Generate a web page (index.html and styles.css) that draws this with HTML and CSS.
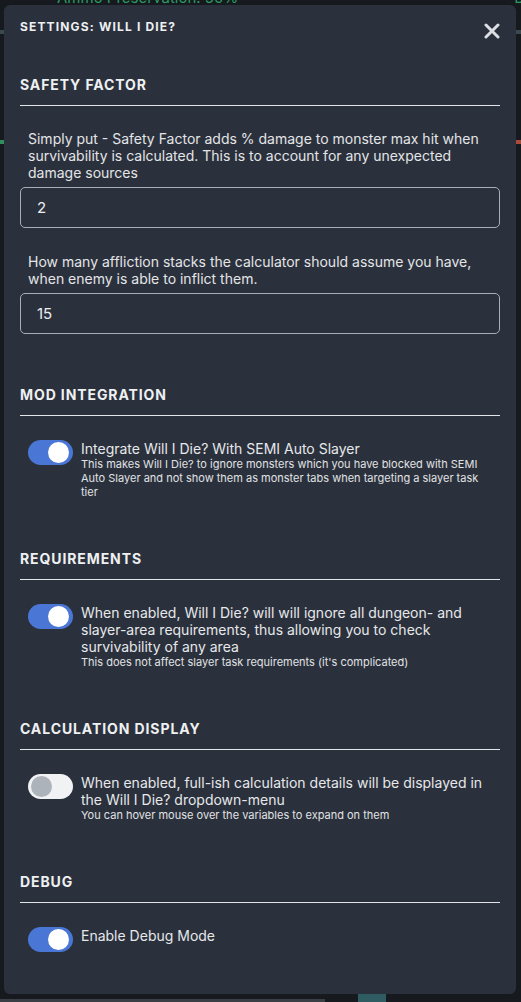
FILE: index.html
```html
<!DOCTYPE html>
<html lang="en">
<head>
<meta charset="utf-8">
<title>Settings: Will I Die?</title>
<link rel="stylesheet" href="styles.css">
</head>
<body>
<div class="backdrop">
  <div class="bd-top"><span class="bd-green">Ammo Preservation: 50%</span><span class="bd-green bd-right">D</span></div>
  <div class="bd-rule"></div>
  <div class="bd-bars"><span class="bd-bar green"></span><span class="bd-bar red"></span></div>
  <div class="bd-bottom"><span class="bd-grey"></span><span class="bd-teal"></span></div>
</div>

<div class="modal" role="dialog" aria-label="Settings: Will I Die?">
  <div class="modal-head">
    <h1 class="modal-title">SETTINGS: WILL I DIE?</h1>
    <button class="close" aria-label="Close">
      <svg width="16" height="16" viewBox="0 0 16 16"><path d="M2 2 L14 14 M14 2 L2 14" stroke="#dcdfe3" stroke-width="3" stroke-linecap="round"/></svg>
    </button>
  </div>

  <section class="section first">
    <h2 class="section-title">SAFETY FACTOR</h2>
    <div class="section-body fields">
      <div class="field">
        <p class="field-label">Simply put - Safety Factor adds % damage to monster max hit when survivability is calculated. This is to account for any unexpected damage sources</p>
        <div class="input">2</div>
      </div>
      <div class="field">
        <p class="field-label">How many affliction stacks the calculator should assume you have, when enemy is able to inflict them.</p>
        <div class="input">15</div>
      </div>
    </div>
  </section>

  <section class="section">
    <h2 class="section-title">MOD INTEGRATION</h2>
    <div class="section-body">
      <div class="toggle-row">
        <span class="switch on"><span class="knob"></span></span>
        <div class="toggle-text">
          <div class="toggle-label">Integrate Will I Die? With SEMI Auto Slayer</div>
          <div class="toggle-hint">This makes Will I Die? to ignore monsters which you have blocked with SEMI Auto Slayer and not show them as monster tabs when targeting a slayer task tier</div>
        </div>
      </div>
    </div>
  </section>

  <section class="section">
    <h2 class="section-title">REQUIREMENTS</h2>
    <div class="section-body">
      <div class="toggle-row">
        <span class="switch on"><span class="knob"></span></span>
        <div class="toggle-text">
          <div class="toggle-label">When enabled, Will I Die? will will ignore all dungeon- and slayer-area requirements, thus allowing you to check survivability of any area</div>
          <div class="toggle-hint">This does not affect slayer task requirements (it's complicated)</div>
        </div>
      </div>
    </div>
  </section>

  <section class="section">
    <h2 class="section-title">CALCULATION DISPLAY</h2>
    <div class="section-body">
      <div class="toggle-row">
        <span class="switch off"><span class="knob"></span></span>
        <div class="toggle-text">
          <div class="toggle-label">When enabled, full-ish calculation details will be displayed in the Will I Die? dropdown-menu</div>
          <div class="toggle-hint">You can hover mouse over the variables to expand on them</div>
        </div>
      </div>
    </div>
  </section>

  <section class="section">
    <h2 class="section-title">DEBUG</h2>
    <div class="section-body">
      <div class="toggle-row">
        <span class="switch on"><span class="knob"></span></span>
        <div class="toggle-text">
          <div class="toggle-label">Enable Debug Mode</div>
        </div>
      </div>
    </div>
  </section>
</div>
</body>
</html>
```

FILE: styles.css
```css
* { box-sizing: border-box; }

html, body {
  margin: 0;
  height: 100%;
}

body {
  background: #16191e;
  font-family: Inter, "Noto Sans", "Liberation Sans", sans-serif;
  overflow: hidden;
}

/* page behind the modal */
.backdrop {
  height: 100%;
  display: flex;
  flex-direction: column;
}
.bd-top {
  display: flex;
  justify-content: space-between;
  margin-top: -10px;
  padding: 0 0 0 57px;
  font-size: 15px;
  line-height: 16px;
}
.bd-green { color: #2b9a63; }
.bd-right { margin-right: -4px; }
.bd-rule {
  margin-top: 24px;
  height: 4px;
  background: #3b4850;
}
.bd-bars {
  margin-top: 106px;
  display: flex;
  justify-content: space-between;
}
.bd-bar { height: 4px; width: 8px; }
.bd-bar.green { background: #2f8f5e; }
.bd-bar.red { background: #a94a3c; }
.bd-bottom {
  margin-top: auto;
  display: flex;
  align-items: flex-end;
  height: 8px;
}
.bd-grey { width: 325px; height: 3px; background: #3a3f46; }
.bd-teal { margin-left: 33px; width: 28px; height: 8px; background: #2f5c62; }

/* modal */
.modal {
  position: fixed;
  left: 4px;
  top: 5px;
  width: 512px;
  height: 989px;
  background: #2b313c;
  border-radius: 6px;
  padding: 13px 16px 0 16px;
  color: #e6e8eb;
}

.modal-head {
  display: flex;
  justify-content: space-between;
  align-items: flex-start;
  height: 18px;
}
.modal-title {
  margin: 0;
  font-size: 12px;
  line-height: 18px;
  font-weight: 700;
  letter-spacing: 1.15px;
  color: #eef0f2;
}
.close {
  margin-top: 5px;
  padding: 0;
  border: 0;
  background: none;
  width: 16px;
  height: 16px;
  display: block;
}
.close svg { display: block; }

.section { margin-top: 50px; }
.section.first { margin-top: 39px; }

.section-title {
  margin: 0;
  font-size: 14px;
  line-height: 20px;
  font-weight: 700;
  letter-spacing: 0.9px;
  color: #eef0f2;
  padding-bottom: 10px;
  border-bottom: 1px solid #e3e5e8;
}

.section-body { padding-top: 24px; }
.section-body.fields { padding-bottom: 1px; }

.field + .field { margin-top: 25px; }
.field-label {
  margin: 0 0 6px 0;
  padding-left: 8px;
  font-size: 14px;
  line-height: 17px;
  color: #e3e5e8;
}
.input {
  height: 41px;
  border: 1px solid #a9aeb5;
  border-radius: 5px;
  padding: 0 16px;
  display: flex;
  align-items: center;
  font-size: 15px;
  color: #eceef0;
}

.toggle-row {
  display: flex;
  align-items: flex-start;
  gap: 8px;
  padding-left: 8px;
  padding-right: 12px;
}
.switch {
  flex: none;
  width: 45px;
  height: 25px;
  border-radius: 13px;
  display: flex;
  align-items: center;
  padding: 0 4px 0 3px;
}
.switch.on {
  background: #4a76d6;
  justify-content: flex-end;
}
.switch.off {
  background: #f1f2f4;
  justify-content: flex-start;
}
.knob {
  width: 21px;
  height: 21px;
  border-radius: 50%;
}
.switch.on .knob { background: #ffffff; }
.switch.off .knob { background: #adb3bb; }

.toggle-text { min-width: 0; }
.toggle-label {
  font-size: 14px;
  line-height: 17px;
  color: #e6e8eb;
}
.toggle-hint {
  font-size: 11px;
  line-height: 14px;
  color: #e0e2e5;
}
```
